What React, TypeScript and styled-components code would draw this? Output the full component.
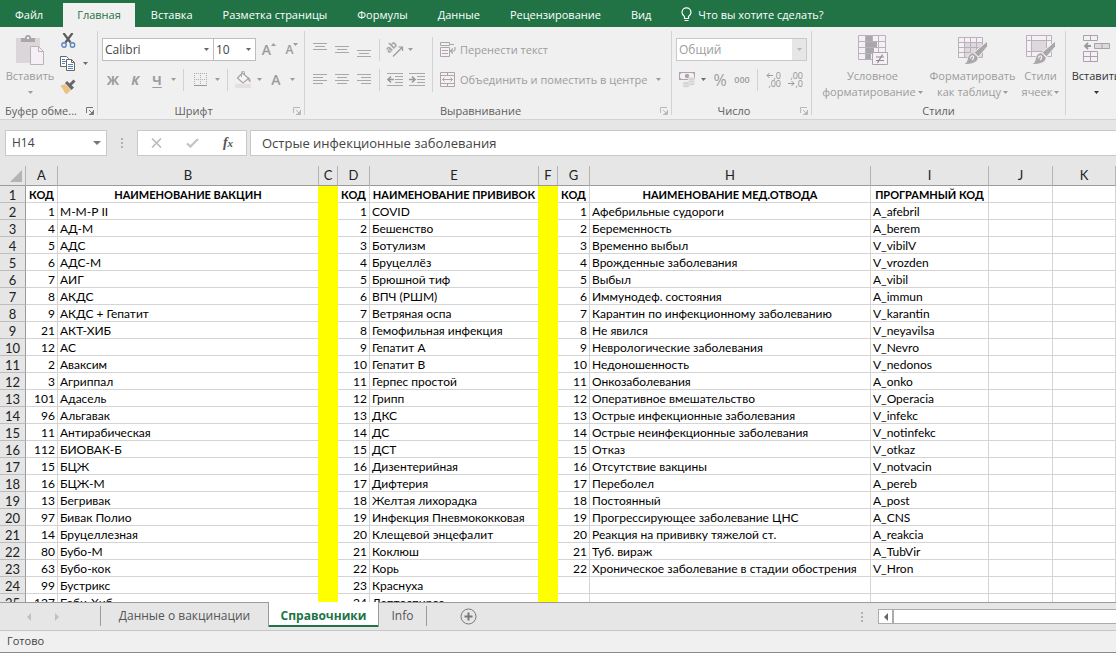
import React from 'react';
import styled, { createGlobalStyle, css } from 'styled-components';

const ui = '"Open Sans", "Noto Sans", sans-serif';
const sheet = 'Lato, "Open Sans", sans-serif';

const c = {
  green: '#217346',
  ribbon: '#f0f0f0',
  chrome: '#e6e6e6',
  line: '#d2d2d2',
  dark: '#444444',
  label: '#5f5f5f',
  off: '#9c9c9c',
  icon: '#aaa6aa',
  pale: '#f6eff6',
};

const Global = createGlobalStyle`
  * { box-sizing: border-box; }
  body { margin: 0; }
  button, input, select { font: inherit; color: inherit; }
  button { background: none; border: 0; padding: 0; }
`;

const Page = styled.div`
  display: flex;
  flex-direction: column;
  height: 100vh;
  overflow: hidden;
  background: ${c.chrome};
  color: ${c.dark};
  font: 11px/16px ${ui};
`;

/* ---------- ribbon tabs ---------- */

const TabBar = styled.nav`
  display: flex;
  flex: none;
  align-items: flex-end;
  gap: 2px;
  height: 27px;
  background: ${c.green};
  color: #fff;
`;

const RibbonTab = styled.button<{ $active?: boolean }>`
  flex: none;
  height: 24px;
  padding: 0 14px;
  line-height: 24px;
  white-space: nowrap;
  ${p => p.$active && css`
    background: ${c.ribbon};
    color: ${c.green};
  `}
`;

const FileTab = styled(RibbonTab)`
  padding: 0 18px 0 15px;
`;

const TellMe = styled(RibbonTab)`
  display: flex;
  align-items: center;
  gap: 6px;
`;

/* ---------- ribbon body ---------- */

const Ribbon = styled.div`
  display: flex;
  flex: none;
  height: 93px;
  overflow: hidden;
  background: ${c.ribbon};
  border-bottom: 1px solid ${c.line};
`;

const GroupBox = styled.section<{ $w: number }>`
  display: flex;
  flex: none;
  flex-direction: column;
  width: ${p => p.$w}px;
`;

const GroupBody = styled.div<{ $center?: boolean }>`
  display: flex;
  height: 76px;
  padding-left: 4px;
  ${p => p.$center && css`justify-content: center;`}
`;

const GroupFooter = styled.footer`
  display: flex;
  align-items: center;
  height: 16px;
  color: ${c.label};
`;

const GroupName = styled.span`
  flex: 1;
  text-align: center;
  white-space: nowrap;
`;

const LauncherButton = styled.button<{ $off?: boolean }>`
  display: flex;
  width: 8px;
  margin: 0 3px 0 4px;
  color: ${p => (p.$off ? '#b8b8b8' : '#777')};
`;

const GroupLine = styled.div`
  flex: none;
  width: 1px;
  height: 84px;
  margin-top: 4px;
  background: ${c.line};
`;

const Stack = styled.div<{ $top?: number; $gap?: number }>`
  display: flex;
  flex: none;
  flex-direction: column;
  gap: ${p => p.$gap ?? 7}px;
  padding-top: ${p => p.$top ?? 11}px;
`;

const Line = styled.div`
  display: flex;
  align-items: center;
  height: 23px;
`;

const Sep = styled.div<{ $tall?: boolean }>`
  flex: none;
  width: 1px;
  height: ${p => (p.$tall ? 55 : 22)}px;
  margin: ${p => (p.$tall ? '10px 7px 0 4px' : '0 4px')};
  background: ${c.line};
`;

const Tool = styled.button<{ $w?: number; $on?: boolean }>`
  display: flex;
  flex: none;
  align-items: center;
  justify-content: center;
  width: ${p => p.$w ?? 22}px;
  height: 22px;
  color: ${p => (p.$on ? '#6a6a6a' : c.off)};
`;

const Letter = styled(Tool)<{ $size?: number; $bold?: boolean; $light?: boolean; $italic?: boolean; $under?: boolean }>`
  font-size: ${p => p.$size ?? 13}px;
  font-weight: ${p => (p.$bold ? 700 : p.$light ? 400 : 600)};
  font-style: ${p => (p.$italic ? 'italic' : 'normal')};
  text-decoration: ${p => (p.$under ? 'underline' : 'none')};
  text-underline-offset: 2px;
`;

const TextTool = styled.button`
  display: flex;
  align-items: center;
  gap: 4px;
  height: 23px;
  color: ${c.off};
  white-space: nowrap;
`;

const BigTool = styled.button<{ $w: number; $on?: boolean }>`
  display: flex;
  flex: none;
  flex-direction: column;
  align-items: center;
  width: ${p => p.$w}px;
  padding-top: 8px;
  color: ${p => (p.$on ? '#333' : c.off)};
  white-space: nowrap;
  svg.big { margin-bottom: 3px; }
`;

const CaptionLine = styled.span`
  display: flex;
  align-items: center;
  justify-content: center;
  gap: 2px;
  height: 16px;
`;

const SelectBox = styled.label<{ $w: number; $off?: boolean }>`
  display: flex;
  position: relative;
  width: ${p => p.$w}px;
  height: 23px;
  margin-right: -1px;
  background: #fff;
  border: 1px solid ${p => (p.$off ? '#c9c9c9' : '#bdbdbd')};
  color: ${p => (p.$off ? c.off : c.dark)};
  select {
    width: 100%;
    padding: 0 2px;
    border: 0;
    background: transparent;
    appearance: none;
    font-size: 12px;
    opacity: 1;
  }
`;

const SelectArrow = styled.span<{ $off?: boolean }>`
  display: flex;
  position: absolute;
  top: 0;
  right: 0;
  bottom: 0;
  align-items: center;
  justify-content: center;
  width: 14px;
  background: ${p => (p.$off ? '#e6e6e6' : 'transparent')};
  color: ${p => (p.$off ? '#b8b8b8' : '#666')};
  pointer-events: none;
`;

/* ---------- formula bar ---------- */

const FormulaBar = styled.div`
  display: flex;
  flex: none;
  height: 46px;
  padding: 10px 0 10px 5px;
  color: ${c.dark};
  font-size: 13px;
`;

const boxed = css`
  height: 26px;
  background: #fff;
  border: 1px solid #c8c8c8;
`;

const NameBox = styled.label`
  ${boxed}
  display: flex;
  align-items: center;
  width: 102px;
  padding-right: 5px;
  input {
    flex: 1;
    min-width: 0;
    padding: 0 0 0 6px;
    border: 0;
    outline: 0;
    background: none;
    font-size: 12px;
  }
`;

const DotsBox = styled.div<{ $w: number }>`
  display: flex;
  flex: none;
  align-items: center;
  justify-content: center;
  width: ${p => p.$w}px;
`;

const EntryTools = styled.div`
  ${boxed}
  display: flex;
  flex: none;
  width: 110px;
  margin-right: 3px;
  button {
    display: flex;
    flex: 1;
    align-items: center;
    justify-content: center;
  }
`;

const FxLabel = styled.span`
  color: #555;
  font: italic 700 14px/20px "Liberation Serif", serif;
  small { font-size: 11px; }
`;

const FormulaInput = styled.input`
  ${boxed}
  flex: 1;
  min-width: 0;
  padding: 0 11px;
  border-right: 0;
  outline: 0;
`;

/* ---------- grid ---------- */

const GridArea = styled.main`
  flex: 1;
  min-height: 0;
  overflow: hidden;
`;

const Grid = styled.table`
  width: 100%;
  table-layout: fixed;
  border-collapse: separate;
  border-spacing: 0;
  background: #fff;
  color: #000;
  font: 12px/14px ${sheet};
`;

const HeadCell = styled.th`
  height: 20px;
  padding: 0;
  background: ${c.chrome};
  border-right: 1px solid #b4b4b4;
  border-bottom: 1px solid #9b9b9b;
  color: #222;
  font-size: 13px;
  font-weight: 400;
  line-height: 19px;
`;

const Corner = styled(HeadCell)`
  line-height: 0;
  text-align: right;
  vertical-align: bottom;
  svg { margin: 0 3px 3px 0; }
`;

const RowHead = styled(HeadCell)`
  height: 17px;
  padding-top: 2px;
  border-right-color: #9b9b9b;
  border-bottom-color: #bdbdbd;
  line-height: 14px;
`;

const Cell = styled.td<{ $kind: 'num' | 'text' | 'title' | 'fill'; $edge?: boolean }>`
  height: 17px;
  padding: 2px 2px 0;
  overflow: hidden;
  border-right: 1px solid #d4d4d4;
  border-bottom: 1px solid #d4d4d4;
  white-space: nowrap;
  text-align: ${p => (p.$kind === 'num' ? 'right' : p.$kind === 'title' ? 'center' : 'left')};
  ${p => p.$kind === 'title' && css`
    font-size: 11px;
    font-weight: 700;
  `}
  ${p => p.$edge && css`border-right-color: #ff0;`}
  ${p => p.$kind === 'fill' && css`
    background: #ff0;
    border-color: #ff0;
  `}
`;

/* ---------- sheet tabs and status ---------- */

const SheetBar = styled.div`
  display: flex;
  flex: none;
  height: 28px;
  border-top: 1px solid #9b9b9b;
  font-size: 12px;
`;

const SheetNav = styled.div`
  display: flex;
  align-items: center;
  justify-content: space-around;
  width: 100px;
  padding: 0 29px 0 15px;
  color: #c0c0c0;
`;

const SheetTab = styled.button<{ $w: number; $active?: boolean; $left?: boolean; $right?: boolean }>`
  flex: none;
  width: ${p => p.$w}px;
  height: 20px;
  margin-top: 3px;
  color: #555;
  line-height: 20px;
  ${p => p.$left && css`border-left: 1px solid #9b9b9b;`}
  ${p => p.$right && css`border-right: 1px solid #9b9b9b;`}
  ${p => p.$active && css`
    height: 25px;
    margin-top: -1px;
    padding-top: 3px;
    background: #fff;
    border: 0 solid #9b9b9b;
    border-width: 0 1px;
    box-shadow: inset 0 -2px ${c.green};
    color: ${c.green};
    font-weight: 700;
  `}
`;

const AddSheet = styled.button`
  display: flex;
  align-items: center;
  justify-content: center;
  width: 82px;
`;

const Spacer = styled.div`
  flex: 1;
`;

const ScrollBar = styled.div`
  display: flex;
  flex: none;
  width: 238px;
  height: 15px;
  margin-top: 6px;
  background: #fff;
  border: 1px solid #ababab;
  border-right: 0;
  color: #666;
  button {
    display: flex;
    align-items: center;
    justify-content: center;
    width: 15px;
    border-right: 2px solid #ababab;
  }
`;

const Status = styled.footer`
  flex: none;
  height: 23px;
  padding: 0 7px;
  background: ${c.ribbon};
  border-top: 1px solid #c6c6c6;
  border-bottom: 1px solid #8a8a8a;
  line-height: 20px;
`;

/* ---------- icons ---------- */

const Svg = ({ w, h, big, children }: { w: number; h: number; big?: boolean; children: React.ReactNode }) => (
  <svg className={big ? 'big' : undefined} width={w} height={h} viewBox={`0 0 ${w} ${h}`} fill="none" aria-hidden="true">{children}</svg>
);

const Caret = () => <Svg w={5} h={3}><path d="M0 0h5L2.500 3z" fill="currentColor" /></Svg>;
const CaretWide = () => <Svg w={8} h={4}><path d="M0 0h8L4 4z" fill="#777" /></Svg>;

const Drop = ({ w = 11, on }: { w?: number; on?: boolean }) => (
  <Tool $w={w} $on={on} aria-label="Ещё"><Caret /></Tool>
);

const Bulb = () => (
  <Svg w={11} h={16}>
    <path d="M3.500 11.500v-2C2 8.500 1 7 1 5.300a4.500 4.500 0 0 1 9 0c0 1.700-1 3.200-2.500 4.200v2zM3.500 13.500h4" stroke="#fff" strokeWidth="1.200" />
  </Svg>
);

const LauncherIcon = () => (
  <Svg w={8} h={8}>
    <path d="M.5 6V.5H7M3 3l3 3M7.500 3v4.500H3" stroke="currentColor" />
    <path d="M7 4v3H4z" fill="currentColor" />
  </Svg>
);

const PasteIcon = () => (
  <Svg w={28} h={30} big>
    <path d="M0 3h24v25H0z" fill="#dad6da" />
    <path d="M5 7V3h4a3 3 0 0 1 6 0h4v4z" fill={c.icon} />
    <path d="M11 2h2v2h-2z" fill={c.ribbon} />
    <path d="M14.500 11.500h8l5 5v13h-13z" fill={c.pale} stroke="#b9b2b9" />
    <path d="M22.500 11.500v5h5" stroke="#b9b2b9" />
  </Svg>
);

const CutIcon = () => (
  <Svg w={15} h={15}>
    <path d="M2.500 0l7 9.500M11.500 0l-7 9.500" stroke="#5c5c5c" strokeWidth="2.200" />
    <circle cx="3" cy="12" r="2.200" stroke="#5a86bd" strokeWidth="1.400" />
    <circle cx="11.500" cy="12" r="2.200" stroke="#5a86bd" strokeWidth="1.400" />
  </Svg>
);

const CopyIcon = () => (
  <Svg w={16} h={15}>
    <path d="M.5.5h6l2 2v8h-8z" fill="#fff" stroke="#666" />
    <path d="M2 3.500h3M2 5.500h4M2 7.500h3" stroke="#5a86bd" />
    <path d="M6.500 3.500h5l3 3v8h-8z" fill="#fff" stroke="#666" />
    <path d="M11.500 3.500v3h3" stroke="#666" />
    <path d="M8 8.500h5M8 10.500h5M8 12.500h5" stroke="#5a86bd" />
  </Svg>
);

const PainterIcon = () => (
  <Svg w={16} h={15}>
    <path d="M0 7l5-2 6 6-4 4c-2-.5-3-2-3.500-3.500C3 9.500 1.500 8 0 7z" fill="#eac282" />
    <path d="M5 4l2-2 7 6.500-2.500 2.500z" fill="#666" />
    <path d="M9 5l4.500-4.500 2 2L11 7z" fill="#666" />
  </Svg>
);

const GrowIcon = () => <Svg w={5} h={3}><path d="M0 3h5L2.500 0z" fill="currentColor" /></Svg>;

const FontSizeMark = styled.span`
  align-self: flex-start;
  display: flex;
  padding-top: 4px;
`;

const BorderIcon = () => (
  <Svg w={13} h={13}>
    <path d="M0 .5h13M0 6.500h13M.5 0v12M6.500 0v12M12.500 0v12" stroke="#b5a8b5" strokeDasharray="1 1" />
    <path d="M0 12.500h13" stroke="#999" />
  </Svg>
);

const BucketIcon = () => (
  <Svg w={17} h={17}>
    <path d="M2.500 7l5-5 6 5.500-5.500 4.500z" fill="#f8f4f8" stroke={c.icon} strokeWidth="1.300" />
    <path d="M6.500 6V1.500a1.500 1.500 0 0 1 3 0V4" stroke={c.icon} />
    <path d="M12 5.500c2.500.5 4 2.500 3.500 6-1.500-.8-2.300-2-2.500-3.500z" fill={c.icon} />
    <path d="M0 13h16v4H0z" fill="#e6dfe0" />
  </Svg>
);

const bars: Record<string, string> = {
  top: 'M0 1.500h14M2 4.500h10M0 7.500h14',
  mid: 'M0 4.500h14M2 7.500h10M0 10.500h14',
  low: 'M0 8.500h14M2 11.500h10M0 14.500h14',
  left: 'M0 2.500h14M0 5.500h10M0 8.500h14M0 11.500h10',
  center: 'M0 2.500h14M2 5.500h10M0 8.500h14M2 11.500h10',
  right: 'M0 2.500h14M4 5.500h10M0 8.500h14M4 11.500h10',
};
const Bars = ({ kind }: { kind: string }) => <Svg w={14} h={15}><path d={bars[kind]} stroke="#a8a8a8" /></Svg>;

const Indent = ({ out }: { out?: boolean }) => (
  <Svg w={16} h={14}>
    <path d="M0 .5h16M8 3.500h8M8 6.500h8M8 9.500h8M0 12.500h16" stroke="#a8a8a8" />
    <path d={out ? 'M7 6.500H1M4 3.500l-3 3 3 3' : 'M0 6.500h6M3 3.500l3 3-3 3'} stroke="#999" strokeWidth="1.600" />
  </Svg>
);

const OrientIcon = () => (
  <Svg w={18} h={17}>
    <g transform="rotate(-45 5 12)">
      <text x="3" y="11" fontSize="10" fontWeight="700" fill="#a4a4a4">ab</text>
    </g>
    <path d="M7 15.500L16 6.500M12.500 6h4v4" stroke="#999" strokeWidth="1.200" />
  </Svg>
);

const WrapIcon = () => (
  <Svg w={16} h={15}>
    <path d="M.5.5h9v3h-9zM.5 5.500h9v9h-9z" fill={c.pale} stroke={c.icon} />
    <path d="M9 2.500h5M2 8.500h6M2 11.500h6" stroke={c.icon} />
    <path d="M15 5v2.500c0 1-.5 1.500-1.500 1.500H11M12.800 6.500L10.500 9l2.300 2.500" stroke={c.icon} strokeWidth="1.200" />
  </Svg>
);

const MergeIcon = () => (
  <Svg w={16} h={15}>
    <path d="M.5.5h14v14H.5z" fill={c.pale} stroke={c.icon} />
    <path d="M0 3.500h15M0 11.500h15M7.500 0v3.500M7.500 11.500V15M2.500 7.500h10M4.500 5.500l-2 2 2 2M10.500 5.500l2 2-2 2" stroke={c.icon} />
  </Svg>
);

const MoneyIcon = () => (
  <Svg w={17} h={17}>
    <path d="M.5 1.500h15v7H.5z" fill={c.pale} stroke={c.icon} />
    <path d="M0 1h4L0 4zM16 1h-4l4 3zM0 9h4L0 6z" fill={c.icon} />
    <circle cx="8" cy="5" r="2.200" fill={c.icon} />
    <g fill="#d6cfd6" stroke={c.ribbon} strokeWidth=".6">
      <ellipse cx="12.500" cy="12.800" rx="3.500" ry="1.600" />
      <ellipse cx="12.500" cy="10.300" rx="3.500" ry="1.600" />
      <ellipse cx="12.500" cy="7.800" rx="3.500" ry="1.600" />
      <ellipse cx="7" cy="14.800" rx="3.500" ry="1.600" />
      <ellipse cx="7" cy="12.300" rx="3.500" ry="1.600" />
    </g>
  </Svg>
);

const DecimalBox = styled.span`
  display: flex;
  flex-direction: column;
  width: 16px;
  color: #8f8f8f;
  font-size: 9px;
  line-height: 8px;
`;

const DecimalRow = styled.span`
  display: flex;
  align-items: center;
  justify-content: flex-end;
  gap: 1px;
  height: 8px;
`;

const DecimalIcon = ({ more }: { more?: boolean }) => (
  <DecimalBox>
    <DecimalRow>
      {more && <Svg w={7} h={7}><path d="M7 3.500H1M3.500 1L1 3.500 3.500 6" stroke="#999" /></Svg>}
      {more ? ',0' : ',00'}
    </DecimalRow>
    <DecimalRow>
      {!more && <Svg w={7} h={7}><path d="M0 3.500h6M3.500 1L6 3.500 3.500 6" stroke="#999" /></Svg>}
      {more ? ',00' : ',0'}
    </DecimalRow>
  </DecimalBox>
);

const CondIcon = () => (
  <Svg w={30} h={30} big>
    <path d="M.5.5h27v24H.5z" fill={c.pale} />
    <path d="M8 1h6v5H8zM8 7h11v5H8zM8 13h8v5H8zM8 19h5v5H8z" fill="#a9a7a9" />
    <path d="M.5.5h27v24H.5zM0 6.500h28M0 12.500h28M0 18.500h14M7.500 0v25M14.500 0v7M20.500 0v17" stroke="#bab2ba" />
    <path d="M8 7h11v5H8z" fill="#a9a7a9" />
    <path d="M14.500 17.500h15v12h-15z" fill={c.pale} stroke={c.icon} />
    <path d="M18 22h8M18 25.500h8M24.500 19.500l-5 8.500" stroke="#8d8b8d" strokeWidth="1.200" />
  </Svg>
);

const BrushShape = () => (
  <g>
    <path d="M29.500 6v5.500L20.500 22l-4.500-4.500z" fill={c.icon} stroke={c.ribbon} />
    <path d="M15 17.500l5 4.500c1 4-4 8-14.500 7.500 3-1.500 3.500-3.500 4-6 .5-3 2.500-5.500 5.500-6z" fill={c.icon} stroke={c.ribbon} />
    <path d="M12.500 23.500c0-2 1.500-3 2.500-2.500s1 2.500-1 4" stroke={c.pale} strokeWidth="1.200" />
  </g>
);

const TableStyleIcon = () => (
  <Svg w={30} h={30} big>
    <path d="M.5 2.500h24v20H.5z" fill={c.pale} />
    <path d="M7 8h17v14H7z" fill="#dcd8dc" />
    <path d="M.5 2.500h24v20H.5zM0 7.500h25M0 12.500h25M0 17.500h25M6.500 2v21M12.500 2v21M18.500 2v21" stroke="#bab2ba" />
    <BrushShape />
  </Svg>
);

const CellStyleIcon = () => (
  <Svg w={30} h={30} big>
    <path d="M.5.5h25v21H.5z" fill={c.pale} />
    <path d="M6 6h14v10H6z" fill="#dcd8dc" />
    <path d="M.5.5h25v21H.5zM0 5.500h26M0 16.500h26M5.500 0v22M20.500 0v22" stroke="#bab2ba" />
    <BrushShape />
  </Svg>
);

const InsertIcon = () => (
  <Svg w={27} h={30} big>
    <path d="M.5.5h14v5H.5zM.5 16.500h14v10H.5z" fill={c.pale} stroke="#aaa2aa" />
    <path d="M7.500 0v6M7.500 16v11M0 21.500h15" stroke="#aaa2aa" />
    <path d="M11.500 8.500h15v5h-15z" fill="#dcd8dc" stroke="#aaa2aa" />
    <path d="M19 8v6" stroke="#aaa2aa" />
    <path d="M8 11H2M5 8l-3 3 3 3" stroke="#999" strokeWidth="1.800" />
  </Svg>
);

const Dots = () => <Svg w={2} h={10}><path d="M0 0h2v2H0zM0 4h2v2H0zM0 8h2v2H0z" fill="#b0b0b0" /></Svg>;
const CancelIcon = () => <Svg w={11} h={10}><path d="M1 .5l9 9M10 .5l-9 9" stroke="#bdbdbd" strokeWidth="1.700" /></Svg>;
const CheckIcon = () => <Svg w={13} h={10}><path d="M1 5.500l3.500 3L12 1" stroke="#c4c4c4" strokeWidth="2.300" /></Svg>;
const CornerIcon = () => <Svg w={12} h={12}><path d="M12 0v12H0z" fill="#b4b4b4" /></Svg>;
const Tri = ({ right }: { right?: boolean }) => (
  <Svg w={4} h={8}><path d={right ? 'M0 0v8l4-4z' : 'M4 0v8L0 4z'} fill="currentColor" /></Svg>
);
const PlusIcon = () => (
  <Svg w={17} h={17}>
    <circle cx="8.500" cy="8.500" r="7.500" stroke="#777" />
    <path d="M4.500 8.500h8M8.500 4.500v8" stroke="#777" strokeWidth="2" />
  </Svg>
);

/* ---------- pieces ---------- */

interface GroupProps { name: string; w: number; launcher?: 'on' | 'off'; center?: boolean; children: React.ReactNode }

const Group = ({ name, w, launcher, center, children }: GroupProps) => (
  <>
    <GroupBox $w={w} aria-label={name}>
      <GroupBody $center={center}>{children}</GroupBody>
      <GroupFooter>
        <GroupName>{name}</GroupName>
        {launcher && <LauncherButton $off={launcher === 'off'} aria-label={`${name}: параметры`}><LauncherIcon /></LauncherButton>}
      </GroupFooter>
    </GroupBox>
    <GroupLine />
  </>
);

const Picker = ({ label, value, w, off }: { label: string; value: string; w: number; off?: boolean }) => (
  <SelectBox $w={w} $off={off}>
    <select aria-label={label} disabled={off}><option>{value}</option></select>
    <SelectArrow $off={off}><Caret /></SelectArrow>
  </SelectBox>
);

/* ---------- data ---------- */

const vaccines: [number, string][] = [
  [1, 'М-М-Р II'], [4, 'АД-М'], [5, 'АДС'], [6, 'АДС-М'], [7, 'АИГ'], [8, 'АКДС'], [9, 'АКДС + Гепатит'],
  [21, 'АКТ-ХИБ'], [12, 'АС'], [2, 'Аваксим'], [3, 'Агриппал'], [101, 'Адасель'], [96, 'Альгавак'],
  [11, 'Антирабическая'], [112, 'БИОВАК-Б'], [15, 'БЦЖ'], [16, 'БЦЖ-М'], [13, 'Бегривак'], [97, 'Бивак Полио'],
  [14, 'Бруцеллезная'], [80, 'Бубо-М'], [63, 'Бубо-кок'], [99, 'Бустрикс'], [127, 'Бэби-Хиб'],
];

const shots = [
  'COVID', 'Бешенство', 'Ботулизм', 'Бруцеллёз', 'Брюшной тиф', 'ВПЧ (РШМ)', 'Ветряная оспа',
  'Гемофильная инфекция', 'Гепатит А', 'Гепатит В', 'Герпес простой', 'Грипп', 'ДКС', 'ДС', 'ДСТ',
  'Дизентерийная', 'Дифтерия', 'Желтая лихорадка', 'Инфекция Пневмококковая', 'Клещевой энцефалит',
  'Коклюш', 'Корь', 'Краснуха', 'Лептоспироз',
];

const refusals: [string, string][] = [
  ['Афебрильные судороги', 'A_afebril'], ['Беременность', 'A_berem'], ['Временно выбыл', 'V_vibilV'],
  ['Врожденные заболевания', 'V_vrozden'], ['Выбыл', 'A_vibil'], ['Иммунодеф. состояния', 'A_immun'],
  ['Карантин по инфекционному заболеванию', 'V_karantin'], ['Не явился', 'V_neyavilsa'],
  ['Неврологические заболевания', 'V_Nevro'], ['Недоношенность', 'V_nedonos'], ['Онкозаболевания', 'A_onko'],
  ['Оперативное вмешательство', 'V_Operacia'], ['Острые инфекционные заболевания', 'V_infekc'],
  ['Острые неинфекционные заболевания', 'V_notinfekc'], ['Отказ', 'V_otkaz'], ['Отсутствие вакцины', 'V_notvacin'],
  ['Переболел', 'A_pereb'], ['Постоянный', 'A_post'], ['Прогрессирующее заболевание ЦНС', 'A_CNS'],
  ['Реакция на прививку тяжелой ст.', 'A_reakcia'], ['Туб. вираж', 'A_TubVir'],
  ['Хроническое заболевание в стадии обострения', 'V_Hron'],
];

const columns: { id: string; w?: number; kind: 'num' | 'text' | 'fill'; edge?: boolean }[] = [
  { id: 'A', w: 32, kind: 'num' }, { id: 'B', w: 261, kind: 'text', edge: true }, { id: 'C', w: 19, kind: 'fill' },
  { id: 'D', w: 32, kind: 'num' }, { id: 'E', w: 169, kind: 'text', edge: true }, { id: 'F', w: 19, kind: 'fill' },
  { id: 'G', w: 32, kind: 'num' }, { id: 'H', w: 281, kind: 'text' }, { id: 'I', w: 118, kind: 'text' },
  { id: 'J', w: 64, kind: 'text' }, { id: 'K', kind: 'text' },
];

const titles = ['КОД', 'НАИМЕНОВАНИЕ ВАКЦИН', '', 'КОД', 'НАИМЕНОВАНИЕ ПРИВИВОК', '', 'КОД', 'НАИМЕНОВАНИЕ МЕД.ОТВОДА', 'ПРОГРАМНЫЙ КОД', '', ''];

const rowCount = 25;
const rowValues = (i: number): (string | number)[] => {
  const v = vaccines[i];
  const s = shots[i];
  const r = refusals[i];
  return [v?.[0] ?? '', v?.[1] ?? '', '', s ? i + 1 : '', s ?? '', '', r ? i + 1 : '', r?.[0] ?? '', r?.[1] ?? '', '', ''];
};

const menu = ['Вставка', 'Разметка страницы', 'Формулы', 'Данные', 'Рецензирование', 'Вид'];

export default function App() {
  return (
    <Page>
      <Global />
      <TabBar>
        <FileTab>Файл</FileTab>
        <RibbonTab $active>Главная</RibbonTab>
        {menu.map(m => <RibbonTab key={m}>{m}</RibbonTab>)}
        <TellMe><Bulb />Что вы хотите сделать?</TellMe>
      </TabBar>

      <Ribbon>
        <Group name="Буфер обме..." w={97} launcher="on">
          <BigTool $w={52}><PasteIcon /><CaptionLine>Вставить</CaptionLine><CaptionLine><Caret /></CaptionLine></BigTool>
          <Stack $top={2} $gap={0}>
            <Line><Tool $w={24} aria-label="Вырезать"><CutIcon /></Tool></Line>
            <Line><Tool $w={24} aria-label="Копировать"><CopyIcon /></Tool><Drop on /></Line>
            <Line><Tool $w={24} aria-label="Формат по образцу"><PainterIcon /></Tool></Line>
          </Stack>
        </Group>

        <Group name="Шрифт" w={206} launcher="off">
          <Stack>
            <Line>
              <Picker label="Шрифт" value="Calibri" w={112} />
              <Picker label="Размер шрифта" value="10" w={43} />
              <Letter $w={28} $size={14} aria-label="Увеличить размер"><span>A</span><FontSizeMark><GrowIcon /></FontSizeMark></Letter>
              <Letter $w={18} $size={12} aria-label="Уменьшить размер"><span>A</span><FontSizeMark><Caret /></FontSizeMark></Letter>
            </Line>
            <Line>
              <Letter $bold>Ж</Letter>
              <Letter $bold $italic>К</Letter>
              <Letter $bold $under>Ч</Letter>
              <Drop />
              <Sep />
              <Tool $w={24} aria-label="Границы"><BorderIcon /></Tool>
              <Drop />
              <Sep />
              <Tool $w={22} aria-label="Цвет заливки"><BucketIcon /></Tool>
              <Drop />
              <Letter $size={14}>A</Letter>
              <Drop />
            </Line>
          </Stack>
        </Group>

        <Group name="Выравнивание" w={366} launcher="off">
          <Stack>
            <Line>
              {['top', 'mid', 'low'].map(k => <Tool key={k} aria-label={k}><Bars kind={k} /></Tool>)}
              <Sep />
              <Tool aria-label="Ориентация"><OrientIcon /></Tool>
              <Drop w={8} />
            </Line>
            <Line>
              {['left', 'center', 'right'].map(k => <Tool key={k} aria-label={k}><Bars kind={k} /></Tool>)}
              <Sep />
              <Tool aria-label="Уменьшить отступ"><Indent out /></Tool>
              <Tool aria-label="Увеличить отступ"><Indent /></Tool>
            </Line>
          </Stack>
          <Sep $tall />
          <Stack>
            <TextTool><WrapIcon />Перенести текст</TextTool>
            <Line>
              <TextTool><MergeIcon />Объединить и поместить в центре</TextTool>
              <Drop w={22} />
            </Line>
          </Stack>
        </Group>

        <Group name="Число" w={139} launcher="off">
          <Stack>
            <Line><Picker label="Числовой формат" value="Общий" w={131} off /></Line>
            <Line>
              <Tool aria-label="Денежный формат"><MoneyIcon /></Tool>
              <Drop on />
              <Letter $size={16} $light>%</Letter>
              <Letter $size={9}>000</Letter>
              <Sep />
              <Tool aria-label="Увеличить разрядность"><DecimalIcon more /></Tool>
              <Tool aria-label="Уменьшить разрядность"><DecimalIcon /></Tool>
            </Line>
          </Stack>
        </Group>

        <Group name="Стили" w={253} center>
          <BigTool $w={110}>
            <CondIcon />
            <CaptionLine>Условное</CaptionLine>
            <CaptionLine>форматирование<Caret /></CaptionLine>
          </BigTool>
          <BigTool $w={90}>
            <TableStyleIcon />
            <CaptionLine>Форматировать</CaptionLine>
            <CaptionLine>как таблицу<Caret /></CaptionLine>
          </BigTool>
          <BigTool $w={46}>
            <CellStyleIcon />
            <CaptionLine>Стили</CaptionLine>
            <CaptionLine>ячеек<Caret /></CaptionLine>
          </BigTool>
        </Group>

        <BigTool $w={60} $on>
          <InsertIcon />
          <CaptionLine>Вставить</CaptionLine>
          <CaptionLine><Caret /></CaptionLine>
        </BigTool>
      </Ribbon>

      <FormulaBar>
        <NameBox><input aria-label="Имя ячейки" defaultValue="H14" /><CaretWide /></NameBox>
        <DotsBox $w={30}><Dots /></DotsBox>
        <EntryTools>
          <button aria-label="Отмена"><CancelIcon /></button>
          <button aria-label="Ввод"><CheckIcon /></button>
          <button><FxLabel>f<small>x</small></FxLabel></button>
        </EntryTools>
        <FormulaInput aria-label="Строка формул" defaultValue="Острые инфекционные заболевания" />
      </FormulaBar>

      <GridArea>
        <Grid>
          <colgroup>
            <col width={26} />
            {columns.map(col => <col key={col.id} width={col.w} />)}
          </colgroup>
          <thead>
            <tr>
              <Corner aria-label="Выделить все"><CornerIcon /></Corner>
              {columns.map(col => <HeadCell key={col.id} scope="col">{col.id}</HeadCell>)}
            </tr>
          </thead>
          <tbody>
            {Array.from({ length: rowCount }, (_, n) => (
              <tr key={n}>
                <RowHead scope="row">{n + 1}</RowHead>
                {(n === 0 ? titles : rowValues(n - 1)).map((v, i) => (
                  <Cell key={i} $kind={n === 0 && columns[i].kind !== 'fill' ? 'title' : columns[i].kind} $edge={columns[i].edge}>{v}</Cell>
                ))}
              </tr>
            ))}
          </tbody>
        </Grid>
      </GridArea>

      <SheetBar>
        <SheetNav>
          <button aria-label="Предыдущий лист"><Tri /></button>
          <button aria-label="Следующий лист"><Tri right /></button>
        </SheetNav>
        <SheetTab $w={168} $left>Данные о вакцинации</SheetTab>
        <SheetTab $w={111} $active>Справочники</SheetTab>
        <SheetTab $w={48} $right>Info</SheetTab>
        <AddSheet aria-label="Новый лист"><PlusIcon /></AddSheet>
        <Spacer />
        <DotsBox $w={32}><Dots /></DotsBox>
        <ScrollBar><button aria-label="Прокрутить влево"><Tri /></button></ScrollBar>
      </SheetBar>
      <Status>Готово</Status>
    </Page>
  );
}
